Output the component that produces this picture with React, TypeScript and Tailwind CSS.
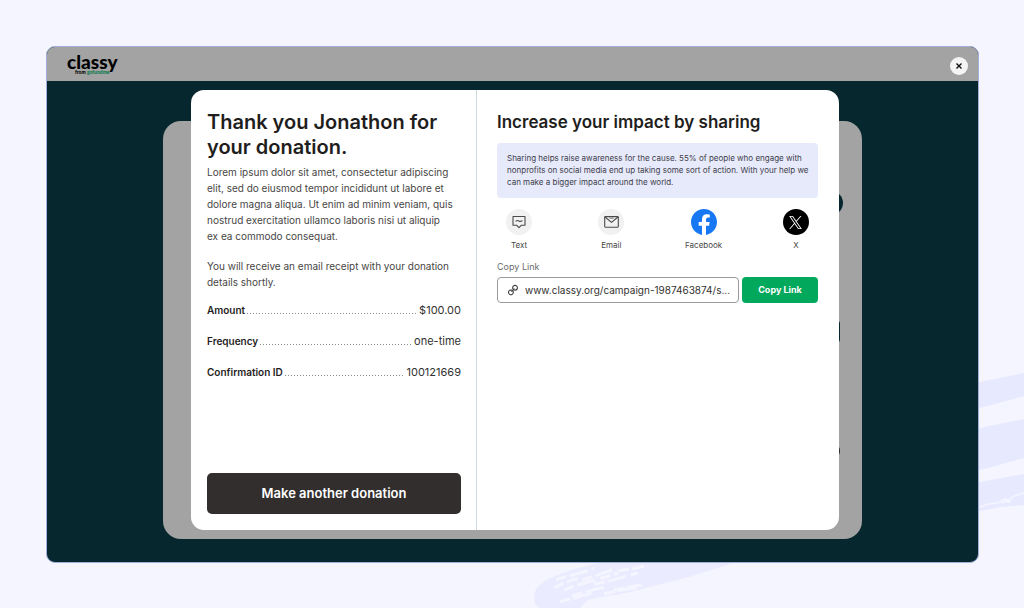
import React from "react";

const details = [
  { label: "Amount", value: "$100.00" },
  { label: "Frequency", value: "one-time" },
  { label: "Confirmation ID", value: "100121669" },
];

const TextIcon = () => (
  <span className="flex size-[26px] items-center justify-center rounded-full bg-[#f1f1f1]">
    <svg viewBox="0 0 14 14" className="size-3.5" fill="none" stroke="#4a4a4a">
      <path d="M1 1.5h12v8.8H9.2L7 12.6l-2.2-2.3H1z" strokeWidth="1.1" strokeLinejoin="round" />
      <path d="M4 6.2c1-.9 1.9-.9 2.9-.2 1 .6 2 .6 3.1-.2" strokeWidth="1.1" strokeLinecap="round" />
    </svg>
  </span>
);

const EmailIcon = () => (
  <span className="flex size-[26px] items-center justify-center rounded-full bg-[#f1f1f1]">
    <svg viewBox="0 0 15 14" className="h-3.5 w-[15px]" fill="none" stroke="#4a4a4a">
      <rect x="0.7" y="1.6" width="13.6" height="10.6" rx="0.6" strokeWidth="1.1" />
      <path d="M1 2l6.5 5.4L14 2" strokeWidth="1.1" strokeLinejoin="round" />
      <path d="M5.4 3.2h4.2" strokeWidth="0.7" />
    </svg>
  </span>
);

const FacebookIcon = () => (
  <svg viewBox="0 0 24 24" className="size-[26px]">
    <path
      fill="#1877f2"
      d="M24 12.073c0-6.627-5.373-12-12-12s-12 5.373-12 12c0 5.99 4.388 10.954 10.125 11.854v-8.385H7.078v-3.47h3.047V9.43c0-3.007 1.792-4.669 4.533-4.669 1.312 0 2.686.235 2.686.235v2.953H15.83c-1.491 0-1.956.925-1.956 1.874v2.25h3.328l-.532 3.47h-2.796v8.385C19.612 23.027 24 18.062 24 12.073z"
    />
  </svg>
);

const XIcon = () => (
  <span className="flex size-[26px] items-center justify-center rounded-full bg-black">
    <svg viewBox="0 0 1200 1227" className="size-[13px]">
      <path
        fill="#fff"
        d="M714.163 519.284L1160.89 0H1055.03L667.137 450.887L357.328 0H0L468.492 681.821L0 1226.37H105.866L515.491 750.218L842.672 1226.37H1200L714.137 519.284H714.163ZM569.165 687.828L521.697 619.934L144.011 79.6944H306.615L611.412 515.685L658.88 583.579L1055.08 1150.3H892.476L569.165 687.854V687.828Z"
      />
    </svg>
  </span>
);

const LinkIcon = () => (
  <svg viewBox="0 0 12 12" className="size-3 shrink-0" fill="none" stroke="#3f3f3f" strokeWidth="1.1" strokeLinecap="round">
    <path d="M6.1 5.2A2.4 2.4 0 1 1 8.6 6.1L7.2 6" />
    <path d="M5.9 7A2.4 2.4 0 1 1 3.4 6L4.8 6.1" />
    <path d="M4.8 7.4L7.2 4.8" />
  </svg>
);

const shareOptions = [
  { name: "Text", icon: <TextIcon /> },
  { name: "Email", icon: <EmailIcon /> },
  { name: "Facebook", icon: <FacebookIcon /> },
  { name: "X", icon: <XIcon /> },
];

// Loose brush strokes behind the window
const BrushStrokes = () => (
  <>
    <svg viewBox="0 0 60 150" className="absolute top-[365px] right-0 h-[150px] w-[60px]" aria-hidden="true">
      <g fill="#e7e9ff">
        <path d="M0 21L16 17 60 8V31L16 43 0 47z" />
        <path d="M0 66L16 63 60 54V93L16 105 0 108z" />
        <path d="M0 119L16 117 60 109V140L36 142 16 146 0 148z" />
      </g>
      <path d="M16 142L24 139 34 138 40 134 45 135 50 131 60 128" stroke="#f5f5ff" strokeWidth="1.5" fill="none" />
      <path d="M37 138L42 136 47 137" stroke="#f5f5ff" strokeWidth="2" fill="none" />
    </svg>
    <svg viewBox="0 0 210 48" className="absolute bottom-0 left-[530px] h-12 w-[210px]" aria-hidden="true">
      <path
        fill="#ebebff"
        d="M4 38c0-12 10-18 26-24C46 8 60 5 74 2h130c-8 4-20 7-32 11-18 6-38 10-56 15-14 4-28 7-40 8-8 2-12 2-18 4-4 3-6 5-8 8H10C6 46 4 42 4 38z"
      />
      <path
        d="M34 30c16-7 34-10 54-17M42 36c10-3 24-8 36-9M64 24c20-3 30-8 44-11M26 20c12-5 26-6 38-12M84 30c10-1 18-4 28-5M88 11c8-2 18-2 26-5M30 42c10-4 20-5 32-9M52 20c10-3 18-6 30-10M74 34c10-2 20-5 34-6M24 28c8-4 14-7 24-10"
        stroke="#f5f5ff"
        strokeWidth="3"
        strokeDasharray="11 3 19 5"
        fill="none"
      />
    </svg>
  </>
);

const ThankYou = () => (
  <section className="flex flex-col border-r border-[#cfdcdf] pt-5 pr-[15px] pb-4 pl-4">
    <h1 className="text-[20px] leading-[25px] font-semibold text-[#1f1e1d]">
      Thank you Jonathon for your donation.
    </h1>
    <div className="mt-1 text-[10px] leading-4 text-[#474645]">
      <p>
        Lorem ipsum dolor sit amet, consectetur adipiscing elit, sed do eiusmod tempor incididunt ut
        labore et dolore magna aliqua. Ut enim ad minim veniam, quis nostrud exercitation ullamco
        laboris nisi ut aliquip ex&nbsp;ea commodo consequat.
      </p>
      <p className="mt-3.5">
        You will receive an email receipt with your donation details shortly.
      </p>
    </div>
    <dl className="mt-3 leading-4">
      {details.map((item) => (
        <div key={item.label} className="mb-[15px] flex items-baseline gap-0.5">
          <dt className="text-[10px] font-semibold text-[#1f1e1d]">{item.label}</dt>
          <div className="h-px flex-1 bg-[repeating-linear-gradient(90deg,#8d8d8d_0_1px,transparent_1px_3px)]" />
          <dd className="text-[11px] text-[#333231]">{item.value}</dd>
        </div>
      ))}
    </dl>
    <button type="button" className="mt-auto h-[41px] w-full rounded-[5px] bg-[#312e2d] text-[13px] font-semibold text-white">
      Make another donation
    </button>
  </section>
);

const Share = () => (
  <section className="min-w-0 pt-5 pr-[21px] pb-4 pl-5">
    <h2 className="text-[17px] leading-6 font-semibold text-[#1f1e1d]">Increase your impact by sharing</h2>
    <p className="mt-[9px] rounded bg-[#e7eafa] pt-[9px] pr-1.5 pb-2.5 pl-2.5 text-[8px] leading-3 text-[#40404a]">
      Sharing helps raise awareness for the cause. 55% of people who engage with nonprofits on
      social media end up taking some sort of action. With your help we can make a bigger impact
      around the world.
    </p>
    <div className="mt-[11px] flex justify-between">
      {shareOptions.map((item) => (
        <button key={item.name} type="button" className="flex w-11 flex-col items-center gap-1 text-[8px] leading-3 text-[#474645]">
          {item.icon}
          {item.name}
        </button>
      ))}
    </div>
    <label htmlFor="share-link" className="mt-2.5 block text-[9px] leading-3 text-[#6b6b6b]">
      Copy Link
    </label>
    <div className="mt-1 flex gap-[3px]">
      <div className="flex h-[26px] min-w-0 flex-1 items-center gap-1.5 rounded border border-[#9a9a9a] pr-1 pl-[9px]">
        <LinkIcon />
        <input
          id="share-link"
          type="text"
          readOnly
          value="www.classy.org/campaign-1987463874/s..."
          className="min-w-0 flex-1 bg-transparent text-[10px] text-[#333231] outline-none"
        />
      </div>
      <button type="button" className="h-[26px] w-[76px] rounded bg-[#02a95c] text-[9px] font-bold text-white">
        Copy Link
      </button>
    </div>
  </section>
);

const App = () => {
  return (
    <div className="relative flex min-h-screen flex-col overflow-hidden bg-[#f5f5ff] pt-[46px] pr-[45px] pb-[45px] pl-[46px] font-['Inter',sans-serif]">
      <BrushStrokes />
      <div className="relative flex flex-1 flex-col overflow-hidden rounded-[9px] border border-[#a3afdb] bg-[#06272e]">
        <header className="flex h-[34px] items-center justify-between bg-[#a3a3a3] pr-2.5 pl-5">
          <a href="#" className="flex flex-col items-center text-black">
            <span className="font-['Lato',sans-serif] text-[19px] leading-4 font-black">classy</span>
            <span className="font-['Lato',sans-serif] text-[5px] leading-[5px] font-black">
              from <span className="text-[#087a4b]">gofundme</span>
            </span>
          </a>
          <button type="button" aria-label="Close" className="mt-1 flex size-[18px] items-center justify-center rounded-full bg-[#f4f4f4]">
            <svg viewBox="0 0 6 6" className="size-1.5" stroke="#111" strokeWidth="1.4">
              <path d="M0.5 0.5l5 5M5.5 0.5l-5 5" />
            </svg>
          </button>
        </header>
        <main className="grid flex-1">
          {/* dimmed page card with its controls peeking out behind the dialog */}
          <div className="relative col-start-1 row-start-1 mx-[116px] mt-10 mb-[23px] rounded-[18px] bg-[#a3a3a3]">
            <span className="absolute top-[70px] right-[19px] size-6 rounded-full bg-[#06272e]" />
            <span className="absolute top-[199px] right-[22px] h-[23px] w-4 rounded-sm bg-[#06272e]" />
            <span className="absolute top-[322px] right-[22px] size-4 rounded-full bg-[#222]" />
          </div>
          <div
            role="dialog"
            aria-label="Donation complete"
            className="relative col-start-1 row-start-1 mt-[9px] mr-[139px] mb-8 ml-36 grid grid-cols-[286px_1fr] rounded-[13px] bg-white"
          >
            <ThankYou />
            <Share />
          </div>
        </main>
      </div>
    </div>
  );
};

export default App;
